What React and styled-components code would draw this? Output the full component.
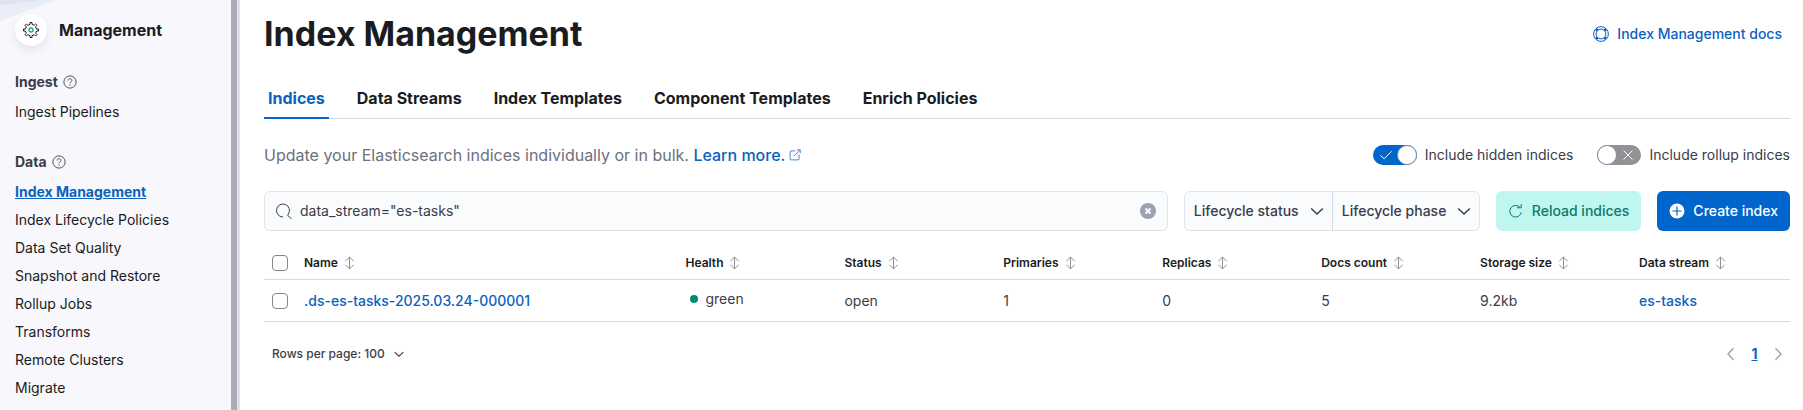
import React, { useState } from "react";
import styled, { createGlobalStyle, css } from "styled-components";

const color = {
  primary: "#0066cc",
  link: "#0b62bd",
  title: "#1a1c21",
  text: "#3a3c49",
  subdued: "#6c7080",
  border: "#d3dae6",
  field: "#fafbfd",
  fieldBorder: "#e1e3e9",
};

const NAV = [
  { title: "Ingest", items: ["Ingest Pipelines"] },
  {
    title: "Data",
    items: [
      "Index Management",
      "Index Lifecycle Policies",
      "Data Set Quality",
      "Snapshot and Restore",
      "Rollup Jobs",
      "Transforms",
      "Remote Clusters",
      "Migrate",
    ],
  },
];

const TABS = [
  "Indices",
  "Data Streams",
  "Index Templates",
  "Component Templates",
  "Enrich Policies",
];

const COLUMNS = [
  "Name",
  "Health",
  "Status",
  "Primaries",
  "Replicas",
  "Docs count",
  "Storage size",
  "Data stream",
];

const ROWS = [
  {
    name: ".ds-es-tasks-2025.03.24-000001",
    health: "green",
    status: "open",
    primaries: 1,
    replicas: 0,
    docs: 5,
    size: "9.2kb",
    stream: "es-tasks",
  },
];

function Icon({ children, size = 16 }) {
  return (
    <Svg width={size} height={size} viewBox="0 0 16 16" aria-hidden="true">
      {children}
    </Svg>
  );
}

const GearIcon = () => (
  <Icon>
    <path d="M7 2.4V.5h2v1.9l2.25.93L12.600 2 14 3.400l-1.330 1.350L13.600 7h1.900v2h-1.900l-.93 2.250L14 12.600 12.600 14l-1.350-1.330L9 13.600v1.900H7v-1.900l-2.250-.93L3.400 14 2 12.600l1.330-1.350L2.400 9H.5V7h1.900l.93-2.250L2 3.400 3.400 2l1.350 1.330z" />
    <circle cx="8" cy="8" r="2" stroke="#12a594" strokeWidth="1.300" />
  </Icon>
);

const HelpIcon = () => (
  <Icon size={14}>
    <circle cx="8" cy="8" r="7" />
    <path d="M5.800 6.300c.1-2.800 4.400-2.700 4.400 0C10.200 7.800 8 7.800 8 9.600M8 10.900v1.300" />
  </Icon>
);

const LifebuoyIcon = () => (
  <Icon>
    <circle cx="8" cy="8" r="7.400" />
    <circle cx="8" cy="8" r="4.900" />
    <path
      d="M3 3l1.600 1.600M13 3l-1.600 1.600M3 13l1.600-1.600M13 13l-1.600-1.600"
      strokeWidth="2.600"
    />
  </Icon>
);

const PopoutIcon = () => (
  <Icon size={12}>
    <path d="M8.500 2.500H3A1.500 1.500 0 001.500 4v9A1.500 1.500 0 003 14.500h9a1.500 1.500 0 001.500-1.500V8M10.500 1.200h4.500v4.500M15 1.200L6.500 9.500" />
  </Icon>
);

const SearchIcon = () => (
  <Icon>
    <path d="M7 14A6.500 6.500 0 1112.400 11.100L11.500 12.200L15.600 15.800" />
  </Icon>
);

const ClearIcon = () => (
  <Icon>
    <circle cx="8" cy="8" r="8" fill="#98a2b3" stroke="none" />
    <path d="M5.500 5.500l5 5M10.500 5.500l-5 5" stroke="#fff" strokeWidth="2" />
  </Icon>
);

const SortIcon = () => (
  <Icon>
    <path d="M7.500 2v12M3.300 6.200L7.500 2l4.200 4.200M3.300 9.800L7.500 14l4.200-4.200" />
  </Icon>
);

const ChevronIcon = ({ size }) => (
  <Icon size={size}>
    <path d="M2.200 5.500L8 11l5.800-5.500" strokeWidth="1.400" />
  </Icon>
);

const ArrowLeftIcon = () => (
  <Icon>
    <path d="M10.500 2.200L5 8l5.500 5.800" strokeWidth="1.400" />
  </Icon>
);

const ArrowRightIcon = () => (
  <Icon>
    <path d="M5.500 2.200L11 8l-5.500 5.800" strokeWidth="1.400" />
  </Icon>
);

const RefreshIcon = () => (
  <Icon>
    <path d="M13.300 9.200A5.800 5.800 0 1112 4.500M9 4.800h4.200V1" />
  </Icon>
);

const PlusIcon = () => (
  <Icon>
    <circle cx="8" cy="8" r="7.500" fill="#fff" stroke="none" />
    <path d="M8 3.500v9M3.500 8h9" stroke={color.primary} strokeWidth="1.200" />
  </Icon>
);

function Dropdown({ label, options, small }) {
  return (
    <DropdownBox $small={small}>
      <DropdownSelect aria-label={label} $small={small}>
        {options.map((option) => (
          <option key={option}>{option}</option>
        ))}
      </DropdownSelect>
      <ChevronIcon size={small ? 12 : 16} />
    </DropdownBox>
  );
}

function Toggle({ label, defaultChecked }) {
  const [checked, setChecked] = useState(Boolean(defaultChecked));

  return (
    <ToggleLabel>
      <ToggleInput
        type="checkbox"
        role="switch"
        checked={checked}
        onChange={() => setChecked(!checked)}
      />
      <Track $checked={checked}>
        <Icon size={12}>
          {checked ? (
            <path d="M.5 8.500l5 4.500 10-10" strokeWidth="1.300" />
          ) : (
            <path d="M2 2l12 12M14 2L2 14" strokeWidth="1.300" />
          )}
        </Icon>
        <Thumb />
      </Track>
      {label}
    </ToggleLabel>
  );
}

function Sidebar() {
  return (
    <Side>
      <Corner viewBox="0 0 56 21" aria-hidden="true">
        <path d="M0 0h56L0 21z" fill="#e9edf5" />
        <path d="M0 0h46L0 5z" fill="#e1e4f0" />
      </Corner>
      <SideHeader>
        <Avatar>
          <GearIcon />
        </Avatar>
        Management
      </SideHeader>
      {NAV.map(({ title, items }) => (
        <NavGroup key={title}>
          <NavTitle>
            {title}
            <HelpIcon />
          </NavTitle>
          <NavList>
            {items.map((item) => (
              <li key={item}>
                <NavLink href="#" $active={item === "Index Management"}>
                  {item}
                </NavLink>
              </li>
            ))}
          </NavList>
        </NavGroup>
      ))}
    </Side>
  );
}

function IndexTable() {
  return (
    <Table>
      <thead>
        <tr>
          <CheckHead>
            <Checkbox type="checkbox" aria-label="Select all rows" />
          </CheckHead>
          {COLUMNS.map((column) => (
            <Head key={column} $wide={column === "Name"}>
              <SortButton>
                {column}
                <SortIcon />
              </SortButton>
            </Head>
          ))}
        </tr>
      </thead>
      <tbody>
        {ROWS.map((row) => (
          <tr key={row.name}>
            <Cell>
              <Checkbox type="checkbox" aria-label={`Select ${row.name}`} />
            </Cell>
            <Cell>
              <Link href="#">{row.name}</Link>
            </Cell>
            <Cell>
              <Health>{row.health}</Health>
            </Cell>
            <Cell>{row.status}</Cell>
            <Cell>{row.primaries}</Cell>
            <Cell>{row.replicas}</Cell>
            <Cell>{row.docs}</Cell>
            <Cell>{row.size}</Cell>
            <Cell>
              <Link href="#">{row.stream}</Link>
            </Cell>
          </tr>
        ))}
      </tbody>
    </Table>
  );
}

function App() {
  const [tab, setTab] = useState("Indices");
  const [query, setQuery] = useState('data_stream="es-tasks"');

  return (
    <Page>
      <GlobalStyle />
      <Sidebar />
      <Scrollbar />
      <Main>
        <Header>
          <Title>Index Management</Title>
          <DocsLink href="#">
            <LifebuoyIcon />
            Index Management docs
          </DocsLink>
        </Header>

        <Tabs role="tablist">
          {TABS.map((name) => (
            <Tab
              key={name}
              role="tab"
              aria-selected={tab === name}
              $active={tab === name}
              onClick={() => setTab(name)}
            >
              {name}
            </Tab>
          ))}
        </Tabs>

        <Intro>
          <Description>
            Update your Elasticsearch indices individually or in bulk.{" "}
            <Link href="#">
              Learn more. <PopoutIcon />
            </Link>
          </Description>
          <Toggles>
            <Toggle label="Include hidden indices" defaultChecked />
            <Toggle label="Include rollup indices" />
          </Toggles>
        </Intro>

        <Toolbar>
          <SearchBox>
            <SearchIcon />
            <SearchInput
              type="text"
              aria-label="Search indices"
              value={query}
              onChange={(e) => setQuery(e.target.value)}
            />
            <IconButton aria-label="Clear input" onClick={() => setQuery("")}>
              <ClearIcon />
            </IconButton>
          </SearchBox>
          <FilterGroup>
            <Dropdown label="Lifecycle status" options={["Lifecycle status"]} />
            <Dropdown label="Lifecycle phase" options={["Lifecycle phase"]} />
          </FilterGroup>
          <Button>
            <RefreshIcon />
            Reload indices
          </Button>
          <Button $fill>
            <PlusIcon />
            Create index
          </Button>
        </Toolbar>

        <IndexTable />

        <Footer>
          <Dropdown
            small
            label="Rows per page"
            options={["Rows per page: 100"]}
          />
          <Pager aria-label="Pagination">
            <IconButton aria-label="Previous page">
              <ArrowLeftIcon />
            </IconButton>
            <PageLink href="#">1</PageLink>
            <IconButton aria-label="Next page">
              <ArrowRightIcon />
            </IconButton>
          </Pager>
        </Footer>
      </Main>
    </Page>
  );
}

export default App;

const GlobalStyle = createGlobalStyle`
  * {
    box-sizing: border-box;
  }

  body {
    margin: 0;
    background: #fff;
    color: ${color.text};
    font: 400 14px/20px Inter, "Liberation Sans", sans-serif;
  }

  button,
  input,
  select {
    margin: 0;
    padding: 0;
    border: 0;
    background: none;
    color: inherit;
    font: inherit;
  }

  button {
    cursor: pointer;
  }
`;

const Svg = styled.svg`
  flex: none;
  fill: none;
  stroke: currentColor;
`;

const Page = styled.div`
  display: flex;
  min-height: 100vh;
`;

const Side = styled.nav`
  position: relative;
  flex: none;
  width: 231px;
  padding: 14px 15px 8px;
  background: #f7f7fc;
`;

const Corner = styled.svg`
  position: absolute;
  top: 0;
  left: 0;
  width: 56px;
`;

const Scrollbar = styled.div`
  flex: none;
  width: 9px;
  background: #dfe0e8;
  border-left: 6px solid #abacb8;
`;

const SideHeader = styled.div`
  position: relative;
  display: flex;
  align-items: center;
  gap: 12px;
  color: ${color.title};
  font-size: 16px;
  font-weight: 700;
`;

const Avatar = styled.span`
  display: flex;
  align-items: center;
  justify-content: center;
  width: 32px;
  height: 32px;
  border-radius: 50%;
  background: #fff;
  box-shadow: 0 4px 8px rgba(60, 60, 80, 0.1);
`;

const NavGroup = styled.section`
  margin-top: 26px;
`;

const NavTitle = styled.h2`
  display: flex;
  align-items: center;
  gap: 5px;
  margin: 0 0 6px;
  font-size: 14px;
  font-weight: 700;
  line-height: 20px;
`;

const NavList = styled.ul`
  margin: 0;
  padding: 0;
  list-style: none;
`;

const NavLink = styled.a`
  display: block;
  color: ${color.title};
  line-height: 28px;
  text-decoration: none;

  ${(props) =>
    props.$active &&
    css`
      color: ${color.link};
      font-weight: 700;
      text-decoration: underline;
    `}
`;

const Main = styled.main`
  flex: 1;
  min-width: 0;
  padding: 12px 13px 0 24px;
`;

const Header = styled.header`
  display: flex;
  align-items: center;
  justify-content: space-between;
`;

const Title = styled.h1`
  margin: 0;
  color: ${color.title};
  font-size: 34px;
  font-weight: 700;
  line-height: 44px;
`;

const Link = styled.a`
  color: ${color.link};
  font-weight: 500;
  text-decoration: none;
`;

const DocsLink = styled(Link)`
  display: flex;
  align-items: center;
  gap: 8px;
  padding: 0 8px;
`;

const Tabs = styled.div`
  display: flex;
  gap: 24px;
  margin-top: 22px;
  box-shadow: inset 0 -1px ${color.border};
`;

const Tab = styled.button`
  height: 41px;
  padding: 0 4px;
  border-bottom: 2px solid transparent;
  color: ${color.title};
  font-size: 16px;
  font-weight: 700;

  ${(props) =>
    props.$active &&
    css`
      border-color: ${color.primary};
      color: ${color.link};
    `}
`;

const Intro = styled.div`
  display: flex;
  align-items: center;
  justify-content: space-between;
  margin: 24px 0;
`;

const Description = styled.p`
  margin: 0;
  color: ${color.subdued};
  font-size: 16px;
  line-height: 24px;
`;

const Toggles = styled.div`
  display: flex;
  gap: 24px;
`;

const ToggleLabel = styled.label`
  display: flex;
  align-items: center;
  gap: 8px;
  cursor: pointer;
`;

const ToggleInput = styled.input`
  position: absolute;
  opacity: 0;
`;

const Track = styled.span`
  display: flex;
  flex-direction: ${(props) => (props.$checked ? "row" : "row-reverse")};
  align-items: center;
  justify-content: space-between;
  width: 44px;
  height: 20px;
  padding: ${(props) => (props.$checked ? "0 0 0 7px" : "0 7px 0 0")};
  border-radius: 10px;
  background: ${(props) => (props.$checked ? color.primary : "#919196")};
  color: #fff;
`;

const Thumb = styled.span`
  width: 20px;
  height: 20px;
  border: 1px solid #8491a5;
  border-radius: 50%;
  background: #fff;
`;

const Toolbar = styled.div`
  display: flex;
  gap: 16px;
`;

const SearchBox = styled.div`
  display: flex;
  flex: 1;
  align-items: center;
  gap: 8px;
  height: 40px;
  padding: 0 11px;
  border: 1px solid ${color.fieldBorder};
  border-radius: 6px;
  background: ${color.field};
`;

const SearchInput = styled.input`
  flex: 1;
  min-width: 0;
  outline: none;
`;

const IconButton = styled.button`
  display: flex;
`;

const FilterGroup = styled.div`
  display: flex;
  height: 40px;
  border: 1px solid ${color.fieldBorder};
  border-radius: 6px;
  background: ${color.field};
`;

const DropdownBox = styled.div`
  display: grid;
  align-items: center;
  width: ${(props) => (props.$small ? "auto" : "147px")};

  & + & {
    border-left: 1px solid ${color.border};
  }

  > * {
    grid-area: 1 / 1;
  }

  svg {
    justify-self: end;
    margin-right: ${(props) => (props.$small ? "0" : "7px")};
    pointer-events: none;
  }
`;

const DropdownSelect = styled.select`
  height: 100%;
  padding: ${(props) => (props.$small ? "0 20px 0 0" : "0 28px 0 9px")};
  appearance: none;
  font-size: ${(props) => (props.$small ? "12px" : "14px")};
  font-weight: 500;
  cursor: pointer;
`;

const Button = styled.button`
  display: flex;
  align-items: center;
  gap: 8px;
  height: 40px;
  padding: 0 12px;
  border-radius: 6px;
  background: ${(props) => (props.$fill ? color.primary : "#bff6ef")};
  color: ${(props) => (props.$fill ? "#fff" : "#0b7b6b")};
  font-weight: 500;
`;

const Table = styled.table`
  width: 100%;
  margin-top: 16px;
  border-collapse: separate;
  border-spacing: 0;
  table-layout: fixed;
`;

const Head = styled.th`
  width: ${(props) => (props.$wide ? "25%" : "auto")};
  height: 33px;
  padding: 0 8px;
  border-bottom: 1px solid ${color.border};
  text-align: left;
`;

const CheckHead = styled(Head)`
  width: 32px;
`;

const SortButton = styled.button`
  display: flex;
  align-items: center;
  gap: 4px;
  color: ${color.title};
  font-size: 12px;
  font-weight: 600;
  line-height: 16px;

  svg {
    color: #8e9096;
  }
`;

const Cell = styled.td`
  height: 42px;
  padding: 0 8px;
  border-bottom: 1px solid ${color.border};
`;

const Checkbox = styled.input`
  display: block;
  width: 16px;
  height: 16px;
  border: 1px solid #84868c;
  border-radius: 4px;
  background: #fff;
  appearance: none;

  &:checked {
    background: ${color.primary};
  }
`;

const Health = styled.span`
  display: flex;
  align-items: center;
  gap: 8px;
  padding: 0 0 4px 4px;

  &::before {
    width: 8px;
    height: 8px;
    border-radius: 50%;
    background: #008a74;
    content: "";
  }
`;

const Footer = styled.footer`
  display: flex;
  align-items: center;
  justify-content: space-between;
  margin-top: 20px;
  padding: 0 4px 0 8px;
`;

const Pager = styled.nav`
  display: flex;
  align-items: center;
  color: #98a2b3;
`;

const PageLink = styled.a`
  width: 31px;
  color: ${color.primary};
  font-weight: 700;
  line-height: 24px;
  text-align: center;
`;
